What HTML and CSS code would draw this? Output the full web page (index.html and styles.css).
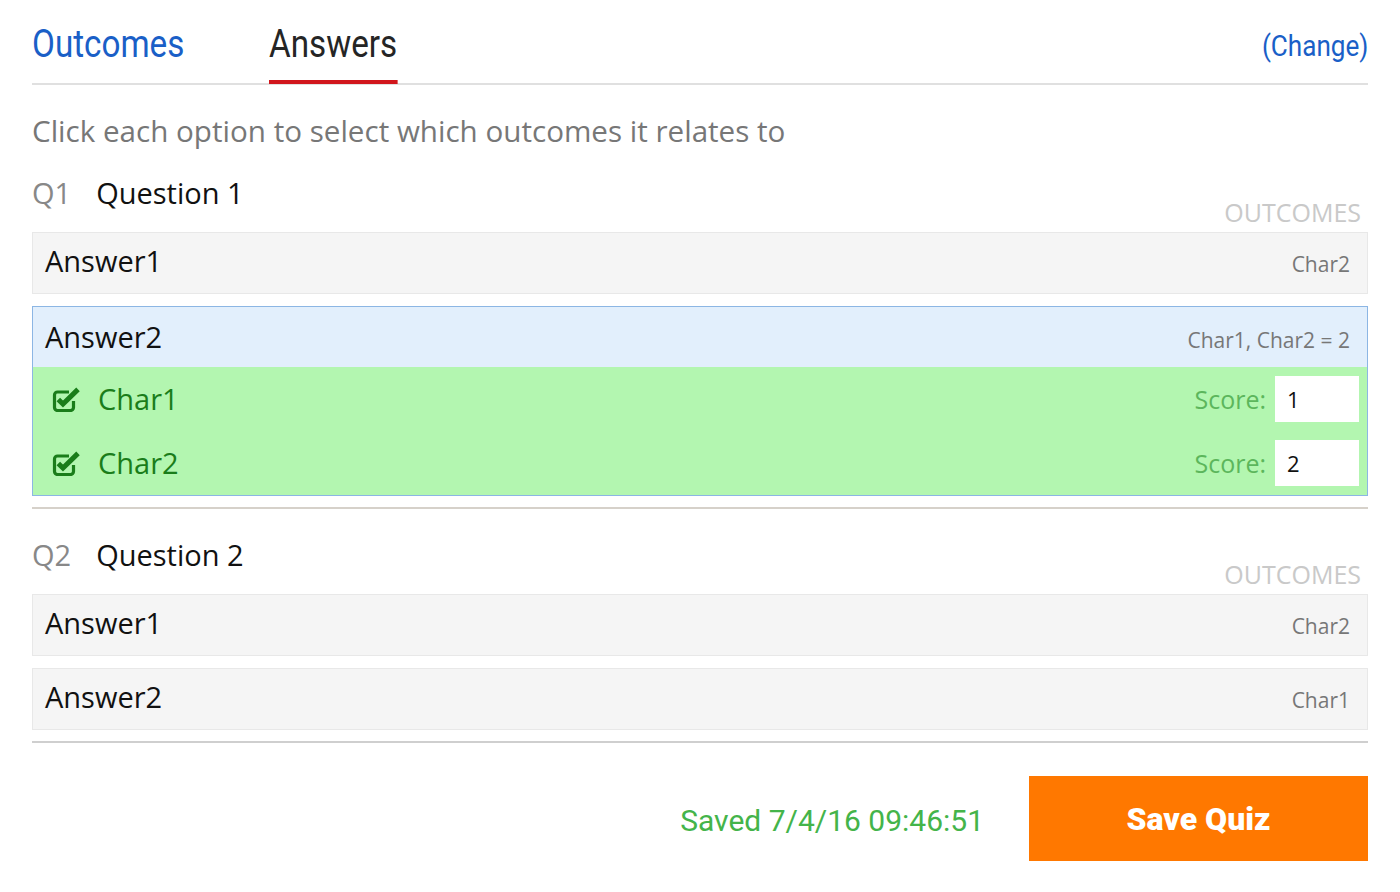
FILE: index.html
```html
<!DOCTYPE html>
<html lang="en">
<head>
<meta charset="utf-8">
<title>Quiz answers</title>
<link rel="stylesheet" href="styles.css">
</head>
<body>
<div class="page">
  <nav class="tabs">
    <a class="tab"><span class="tab-text">Outcomes</span></a>
    <a class="tab active"><span class="tab-text">Answers</span></a>
    <a class="change">(Change)</a>
  </nav>

  <p class="hint">Click each option to select which outcomes it relates to</p>

  <section class="question">
    <div class="q-head">
      <h2 class="q-title"><span class="q-num">Q1</span>Question 1</h2>
      <span class="q-label">OUTCOMES</span>
    </div>
    <div class="answers">
      <div class="answer">
        <span class="a-text">Answer1</span>
        <span class="a-out">Char2</span>
      </div>
      <div class="answer open">
        <div class="answer-head">
          <span class="a-text">Answer2</span>
          <span class="a-out">Char1, Char2 = 2</span>
        </div>
        <div class="outcomes">
          <div class="outcome">
            <svg class="check" width="29" height="25" viewBox="0 0 29 25" aria-hidden="true">
              <path d="M17 5H5.5a3 3 0 0 0-3 3v12.5a3 3 0 0 0 3 3h13a3 3 0 0 0 3-3v-6.5" fill="none" stroke="currentColor" stroke-width="3.2"/>
              <path d="M6.3 12.4L11 17.1L26 2.4" fill="none" stroke="currentColor" stroke-width="5"/>
            </svg>
            <span class="o-name">Char1</span>
            <label class="score">Score: <input class="score-input" type="text" value="1"></label>
          </div>
          <div class="outcome">
            <svg class="check" width="29" height="25" viewBox="0 0 29 25" aria-hidden="true">
              <path d="M17 5H5.5a3 3 0 0 0-3 3v12.5a3 3 0 0 0 3 3h13a3 3 0 0 0 3-3v-6.5" fill="none" stroke="currentColor" stroke-width="3.2"/>
              <path d="M6.3 12.4L11 17.1L26 2.4" fill="none" stroke="currentColor" stroke-width="5"/>
            </svg>
            <span class="o-name">Char2</span>
            <label class="score">Score: <input class="score-input" type="text" value="2"></label>
          </div>
        </div>
      </div>
    </div>
  </section>

  <section class="question second">
    <div class="q-head">
      <h2 class="q-title"><span class="q-num">Q2</span>Question 2</h2>
      <span class="q-label">OUTCOMES</span>
    </div>
    <div class="answers">
      <div class="answer">
        <span class="a-text">Answer1</span>
        <span class="a-out">Char2</span>
      </div>
      <div class="answer">
        <span class="a-text">Answer2</span>
        <span class="a-out">Char1</span>
      </div>
    </div>
  </section>

  <footer class="foot">
    <span class="saved">Saved 7/4/16 09:46:51</span>
    <button class="save" type="button">Save Quiz</button>
  </footer>
</div>
</body>
</html>
```

FILE: styles.css
```css
* { box-sizing: border-box; }

html, body {
  margin: 0;
  background: #fff;
}

body {
  font-family: "Open Sans", "Liberation Sans", sans-serif;
  color: #111;
}

.page {
  width: 1400px;
  padding: 0 32px;
}

/* Tabs */
.tabs {
  display: flex;
  align-items: flex-end;
  height: 85px;
  border-bottom: 2px solid #e0e0e0;
}

.tab {
  flex: none;
  font-family: Roboto, "Liberation Sans", sans-serif;
  font-size: 38px;
  color: #1a5fc7;
  cursor: pointer;
}

.tab:first-child {
  width: 237px;
}

.tab-text {
  display: inline-block;
  line-height: 38px;
  padding-bottom: 17px;
  border-bottom: 4px solid transparent;
  margin-bottom: -1px;
  transform: scaleX(0.875);
  transform-origin: left bottom;
}

.tab.active {
  color: #252525;
}

.tab.active .tab-text {
  border-bottom-color: #d1161c;
}

.change {
  display: inline-block;
  margin-left: auto;
  margin-bottom: 22px;
  font-family: Roboto, "Liberation Sans", sans-serif;
  font-size: 30px;
  line-height: 30px;
  color: #1a5fc7;
  transform: scaleX(0.87);
  transform-origin: right bottom;
  cursor: pointer;
}

/* Hint */
.hint {
  margin: 30px 0 0;
  font-size: 29.6px;
  line-height: 32px;
  color: #777;
}

/* Questions */
.question {
  padding: 26px 0 11px;
  border-bottom: 2px solid #d6d1ca;
}

.question.second {
  border-bottom-color: #cfcfcf;
}

.q-head {
  display: flex;
  justify-content: space-between;
  align-items: flex-end;
  margin-bottom: 7px;
}

.q-title {
  margin: 0 0 12px;
  font-size: 29px;
  line-height: 40px;
  font-weight: 400;
  color: #111;
}

.q-num {
  color: #888;
  margin-right: 25px;
}

.q-label {
  font-size: 25px;
  line-height: 25px;
  color: #c9c9c9;
  padding-right: 7px;
}

.answers {
  display: flex;
  flex-direction: column;
  gap: 12px;
}

.answer {
  display: flex;
  justify-content: space-between;
  align-items: baseline;
  padding: 8px 17px 12px 12px;
  background: #f5f5f5;
  border: 1px solid #e8e8e8;
}

.a-text {
  font-size: 29px;
  line-height: 40px;
  color: #111;
}

.a-out {
  font-size: 21px;
  color: #777;
}

.answer.open {
  display: block;
  padding: 0;
  background: none;
  border: 1px solid #8cb6e4;
}

.answer-head {
  display: flex;
  justify-content: space-between;
  align-items: baseline;
  padding: 10px 17px 10px 12px;
  background: #e2effc;
}

.outcomes {
  background: #b3f6b0;
}

.outcome {
  display: flex;
  align-items: center;
  height: 64px;
  padding: 0 8px 0 19px;
  color: #1a7d1a;
}

.check {
  flex: none;
  margin-right: 17px;
}

.o-name {
  font-size: 29px;
  line-height: 40px;
}

.score {
  margin-left: auto;
  display: flex;
  align-items: center;
  gap: 9px;
  font-size: 25px;
  color: #5cb65c;
}

.score-input {
  width: 84px;
  height: 46px;
  border: none;
  outline: none;
  background: #fff;
  padding: 0 12px;
  font-family: "Open Sans", "Liberation Sans", sans-serif;
  font-size: 22px;
  color: #111;
}

/* Footer */
.foot {
  display: flex;
  justify-content: flex-end;
  align-items: center;
  gap: 45px;
  margin-top: 33px;
}

.saved {
  font-family: Roboto, "Liberation Sans", sans-serif;
  font-size: 30px;
  color: #44b44a;
  padding-top: 4px;
}

.save {
  width: 339px;
  height: 85px;
  border: none;
  background: #ff7800;
  color: #fff;
  font-family: Roboto, "Liberation Sans", sans-serif;
  font-weight: 900;
  font-size: 32px;
  cursor: pointer;
}
```
